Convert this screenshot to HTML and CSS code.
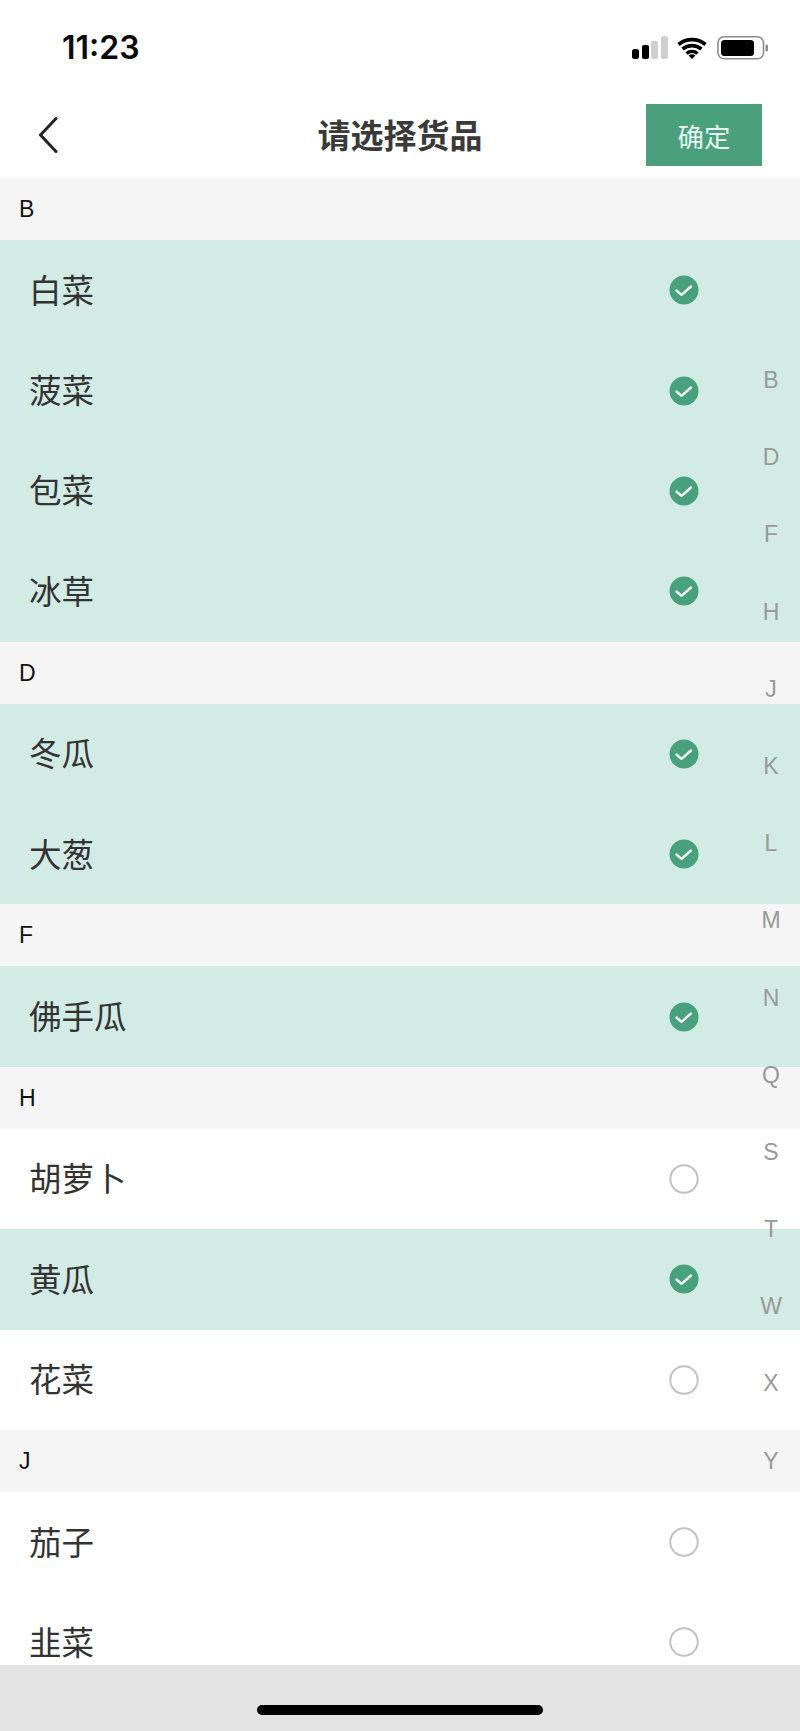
FILE: index.html
```html
<!DOCTYPE html>
<html lang="zh">
<head>
<meta charset="utf-8">
<title>请选择货品</title>
<link rel="stylesheet" href="styles.css">
</head>
<body>
<svg class="sprite" width="0" height="0" aria-hidden="true">
  <symbol id="on" viewBox="0 0 30 30">
    <circle cx="15" cy="15" r="14.500" fill="#48a07c"/>
    <path d="M7.500 15.500l5 4.300 9.500-8.300" fill="none" stroke="#f2faf7" stroke-width="2.400" stroke-linecap="round" stroke-linejoin="round"/>
  </symbol>
  <symbol id="off" viewBox="0 0 30 30">
    <circle cx="15" cy="15" r="13.700" fill="none" stroke="#c2c2c2" stroke-width="2"/>
  </symbol>
</svg>
<div class="phone">
  <header class="status">
    <span class="time">11:23</span>
    <svg class="status-icons" width="136" height="24" viewBox="0 0 136 24">
      <rect x="0" y="13" width="7" height="10" rx="2.500" fill="#000"/>
      <rect x="10" y="9" width="7" height="14" rx="2" fill="#000"/>
      <rect x="19" y="5" width="7" height="18" rx="2" fill="#cfcfcf"/>
      <rect x="29" y="0" width="7" height="23" rx="2" fill="#cfcfcf"/>
      <path d="M46.500 8.500a21 21 0 0 1 27 0M50.500 13a15 15 0 0 1 19 0M54.500 17.500a8.500 8.500 0 0 1 11 0" fill="none" stroke="#000" stroke-width="3.600"/>
      <path d="M56.500 19.600a5 5 0 0 1 7 0L60 23z" fill="#000"/>
      <rect x="86" y="0.800" width="45.500" height="22" rx="6" fill="none" stroke="#8c8c8c" stroke-width="1.600"/>
      <rect x="89" y="4" width="33" height="16" rx="3.500" fill="#000"/>
      <path d="M133.500 8.500a3.500 3.500 0 0 1 0 7z" fill="#8c8c8c"/>
    </svg>
  </header>
  <nav class="nav">
    <svg class="back" width="20" height="36" viewBox="0 0 20 36">
      <path d="M18 1.500L2.500 18 18 34.500" fill="none" stroke="#222" stroke-width="3" stroke-linecap="round" stroke-linejoin="round"/>
    </svg>
    <h1 class="title">请选择货品</h1>
    <button class="confirm">确定</button>
  </nav>
  <main class="list">
    <div class="letter">B</div>
    <div class="row sel"><span>白菜</span><svg class="mark"><use href="#on"/></svg></div>
    <div class="row sel"><span>菠菜</span><svg class="mark"><use href="#on"/></svg></div>
    <div class="row sel"><span>包菜</span><svg class="mark"><use href="#on"/></svg></div>
    <div class="row sel"><span>冰草</span><svg class="mark"><use href="#on"/></svg></div>
    <div class="letter">D</div>
    <div class="row sel"><span>冬瓜</span><svg class="mark"><use href="#on"/></svg></div>
    <div class="row sel"><span>大葱</span><svg class="mark"><use href="#on"/></svg></div>
    <div class="letter">F</div>
    <div class="row sel"><span>佛手瓜</span><svg class="mark"><use href="#on"/></svg></div>
    <div class="letter">H</div>
    <div class="row"><span>胡萝卜</span><svg class="mark"><use href="#off"/></svg></div>
    <div class="row sel"><span>黄瓜</span><svg class="mark"><use href="#on"/></svg></div>
    <div class="row"><span>花菜</span><svg class="mark"><use href="#off"/></svg></div>
    <div class="letter">J</div>
    <div class="row"><span>茄子</span><svg class="mark"><use href="#off"/></svg></div>
    <div class="row"><span>韭菜</span><svg class="mark"><use href="#off"/></svg></div>
  </main>
  <aside class="index">
    <span>B</span><span>D</span><span>F</span><span>H</span><span>J</span><span>K</span><span>L</span><span>M</span><span>N</span><span>Q</span><span>S</span><span>T</span><span>W</span><span>X</span><span>Y</span>
  </aside>
  <footer class="home"><div class="home-bar"></div></footer>
</div>
</body>
</html>
```
FILE: styles.css
```css
* { box-sizing: border-box; }
html, body { margin: 0; padding: 0; background: #fff; }
body { font-family: "Noto Sans CJK SC", "Liberation Sans", sans-serif; }
.sprite { position: absolute; }
.phone {
  position: relative;
  width: 800px;
  height: 1731px;
  display: flex;
  flex-direction: column;
  overflow: hidden;
}
.status {
  height: 94px;
  flex: none;
  display: flex;
  justify-content: space-between;
  align-items: flex-start;
  padding: 28px 32px 0 62px;
}
.time {
  font-family: Inter, "Liberation Sans", sans-serif;
  font-size: 32px;
  font-weight: 600;
  line-height: 40px;
  color: #0a0a0a;
}
.status-icons { margin-top: 8px; }
.nav {
  height: 84px;
  flex: none;
  position: relative;
  display: flex;
  align-items: flex-start;
  justify-content: space-between;
  padding: 10px 38px 0 38px;
}
.back { margin-top: 13px; }
.title {
  position: absolute;
  left: 0;
  right: 0;
  top: 16px;
  margin: 0;
  text-align: center;
  font-size: 33px;
  line-height: 48px;
  font-weight: 700;
  color: #3a3a3a;
}
.confirm {
  width: 116px;
  height: 62px;
  border: 0;
  padding: 0;
  background: #4aa07c;
  color: #e6f5ef;
  font-family: inherit;
  font-size: 26.500px;
  font-weight: 400;
}
.list {
  flex: 1;
  min-height: 0;
  overflow: hidden;
}
.letter {
  height: 62px;
  padding: 0 0 0 19px;
  background: #f5f5f5;
  font-family: "Liberation Sans", sans-serif;
  font-size: 23px;
  line-height: 62px;
  color: #111;
}
.row {
  height: 100.400px;
  padding: 0 101px 0 29px;
  display: flex;
  align-items: center;
  justify-content: space-between;
  font-size: 32.500px;
  color: #333;
  background: #fff;
}
.row span { padding-bottom: 4px; }
.row.sel { background: #d3ebe5; }
.mark { width: 30px; height: 30px; flex: none; }
.index {
  position: absolute;
  top: 342px;
  right: 0;
  width: 58px;
  display: flex;
  flex-direction: column;
  align-items: center;
  font-family: "Liberation Sans", sans-serif;
  font-size: 23px;
  color: #999;
}
.index span { height: 77.200px; line-height: 77.200px; }
.home {
  height: 66px;
  flex: none;
  background: #e3e3e3;
  padding-top: 40px;
  display: flex;
  justify-content: center;
  align-items: flex-start;
}
.home-bar {
  width: 286px;
  height: 10px;
  border-radius: 5px;
  background: #000;
}
```
